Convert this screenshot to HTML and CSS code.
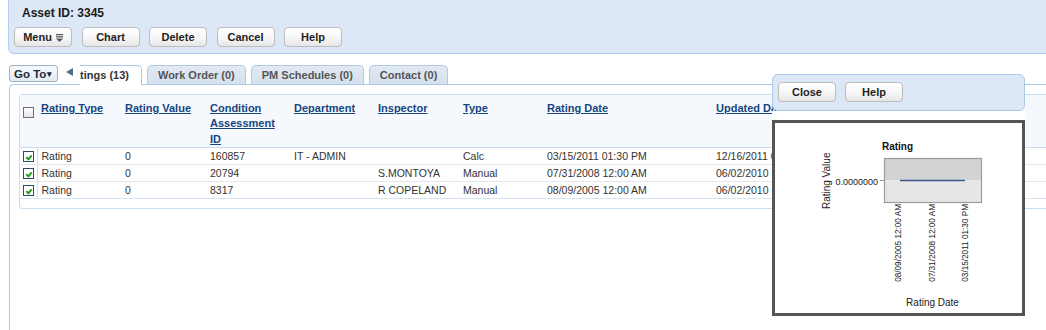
FILE: index.html
```html
<!DOCTYPE html>
<html>
<head>
<meta charset="utf-8">
<link rel="stylesheet" href="styles.css">
</head>
<body>
<div class="toolbar">
  <div class="title">Asset ID: 3345</div>
  <div class="btns">
    <button class="btn">Menu <svg class="menu-ico" width="7" height="8" viewBox="0 0 7 8"><rect x="0" y="0" width="7" height="1.2" fill="#555"/><rect x="0" y="2.2" width="7" height="1.2" fill="#555"/><path d="M0 4.6 L7 4.6 L3.5 8 Z" fill="#555"/></svg></button>
    <button class="btn">Chart</button>
    <button class="btn">Delete</button>
    <button class="btn">Cancel</button>
    <button class="btn">Help</button>
  </div>
</div>

<div class="tabbar">
  <button class="goto">Go To<span class="caret">&#9662;</span></button>
  <span class="tab-arrow"></span>
  <div class="tab-viewport">
    <div class="tabs">
      <div class="tab active">Ratings (13)</div>
      <div class="tab">Work Order (0)</div>
      <div class="tab">PM Schedules (0)</div>
      <div class="tab">Contact (0)</div>
    </div>
  </div>
</div>

<div class="content">
  <div class="grid-panel">
    <table class="grid">
      <colgroup>
        <col class="c-cb"><col class="c84"><col class="c85"><col class="c84"><col class="c84"><col class="c85"><col class="c84"><col class="c169"><col class="c169"><col class="c169">
      </colgroup>
      <thead>
        <tr>
          <th class="cb"><span class="chk"></span></th>
          <th><a>Rating Type</a></th>
          <th><a>Rating Value</a></th>
          <th><a>Condition Assessment ID</a></th>
          <th><a>Department</a></th>
          <th><a>Inspector</a></th>
          <th><a>Type</a></th>
          <th><a>Rating Date</a></th>
          <th><a>Updated Date</a></th>
          <th><a>Updated By</a></th>
        </tr>
      </thead>
      <tbody>
        <tr>
          <td class="cb"><span class="chk on"></span></td>
          <td>Rating</td><td>0</td><td>160857</td><td>IT - ADMIN</td><td></td><td>Calc</td><td>03/15/2011 01:30 PM</td><td>12/16/2011 09:25 AM</td><td></td>
        </tr>
        <tr>
          <td class="cb"><span class="chk on"></span></td>
          <td>Rating</td><td>0</td><td>20794</td><td></td><td>S.MONTOYA</td><td>Manual</td><td>07/31/2008 12:00 AM</td><td>06/02/2010 11:12 AM</td><td></td>
        </tr>
        <tr>
          <td class="cb"><span class="chk on"></span></td>
          <td>Rating</td><td>0</td><td>8317</td><td></td><td>R COPELAND</td><td>Manual</td><td>08/09/2005 12:00 AM</td><td>06/02/2010 11:12 AM</td><td></td>
        </tr>
      </tbody>
    </table>
  </div>
</div>

<div class="chart-popup">
  <div class="popbar">
    <button class="btn">Close</button>
    <button class="btn">Help</button>
  </div>
  <div class="chart-area">
    <div class="chart-box">
      <svg width="247" height="190" viewBox="0 0 247 190">
        <text x="122.5" y="27" class="ch-title" text-anchor="middle">Rating</text>
        <rect x="109.5" y="35.5" width="97" height="22" fill="#d3d3d3"/>
        <rect x="109.5" y="57.5" width="97" height="22" fill="#e6e6e6"/>
        <rect x="109.5" y="35.5" width="97" height="44" fill="none" stroke="#9c9c9c" stroke-width="1.2"/>
        <line x1="125" y1="57.5" x2="190" y2="57.5" stroke="#3c5a8c" stroke-width="1.4"/>
        <line x1="105" y1="57.5" x2="109" y2="57.5" stroke="#9c9c9c" stroke-width="1"/>
        <text x="103" y="62" class="ch-tick" text-anchor="end">0.0000000</text>
        <text transform="translate(54.5,57.8) rotate(-90)" class="ch-axis" text-anchor="middle">Rating Value</text>
        <text transform="translate(126.2,81) rotate(-90)" class="ch-date" text-anchor="end">08/09/2005 12:00 AM</text>
        <text transform="translate(159.6,81) rotate(-90)" class="ch-date" text-anchor="end">07/31/2008 12:00 AM</text>
        <text transform="translate(193,81) rotate(-90)" class="ch-date" text-anchor="end">03/15/2011 01:30 PM</text>
        <text x="157.5" y="182.5" class="ch-axis" text-anchor="middle">Rating Date</text>
      </svg>
    </div>
  </div>
</div>
</body>
</html>
```
FILE: styles.css
```css
* { box-sizing: border-box; }
html, body { margin: 0; padding: 0; }
body {
  width: 1046px;
  height: 330px;
  overflow: hidden;
  position: relative;
  background: #fff;
  font-family: "Liberation Sans", Arial, sans-serif;
  color: #333;
}

/* top toolbar */
.toolbar {
  margin-left: 8px;
  height: 54px;
  background: #dce8f5;
  border-left: 1px solid #b3cfec;
  border-bottom: 1px solid #a9c8ea;
  border-bottom-left-radius: 6px;
  padding: 6px 0 0 5px;
}
.title {
  margin-left: 8px;
  font-size: 12px;
  font-weight: bold;
  line-height: 14px;
  color: #1b1b1b;
}
.btns {
  display: flex;
  gap: 9.5px;
  margin-top: 7px;
}
.btn {
  width: 58px;
  height: 20px;
  padding: 0;
  border: 1px solid #bcbcbc;
  border-radius: 4px;
  background: linear-gradient(#ffffff, #f6f6f6 55%, #e6e6e6);
  font-family: "Liberation Sans", Arial, sans-serif;
  font-size: 11px;
  font-weight: bold;
  color: #222;
  display: flex;
  align-items: center;
  justify-content: center;
  gap: 4px;
}
.menu-ico { display: block; margin-top: 1px; }

/* tabs */
.tabbar {
  display: flex;
  align-items: flex-start;
  margin-top: 11px;
  height: 19px;
  padding-left: 9px;
  position: relative;
  z-index: 2;
}
.goto {
  width: 49px;
  height: 17px;
  padding: 0 0 0 4px;
  border: 1px solid #9fb1c5;
  border-radius: 3px;
  background: linear-gradient(#f7fafd, #e2eaf4);
  font-family: "Liberation Sans", Arial, sans-serif;
  font-size: 11.5px;
  font-weight: bold;
  color: #1c2a3c;
  display: flex;
  align-items: center;
}
.caret { font-size: 9px; margin-left: 1px; }
.tab-arrow {
  width: 0;
  height: 0;
  margin: 3px 0 0 8px;
  border-top: 4.5px solid transparent;
  border-bottom: 4.5px solid transparent;
  border-right: 7px solid #4f6c8b;
}
.tab-viewport {
  margin-left: 7px;
  flex: 1;
  overflow: hidden;
  height: 20px;
}
.tabs {
  display: flex;
  gap: 5px;
  margin-left: -25px;
  height: 20px;
}
.tab {
  height: 19px;
  padding: 0 10px;
  border: 1px solid #b1c9e3;
  border-bottom: none;
  border-radius: 5px 5px 0 0;
  background: linear-gradient(#e2eaf4, #d4e0ed);
  font-size: 11px;
  font-weight: bold;
  line-height: 18px;
  color: #555;
  white-space: nowrap;
  flex: none;
}
.tab.active {
  height: 20px;
  padding: 0 12px 0 10px;
  background: #fff;
  border-color: #a9c8ea;
  color: #333;
}

/* content */
.content {
  margin-left: 9px;
  height: 260px;
  border-top: 1px solid #a9c8ea;
  border-left: 1px solid #a9c8ea;
  border-top-left-radius: 5px;
  padding: 9px 0 0 9px;
}
.grid-panel {
  width: 1200px;
  border: 1px solid #c9dcf0;
  border-right: none;
  border-radius: 4px 0 0 4px;
  padding-bottom: 9px;
}
.grid {
  border-collapse: collapse;
  table-layout: fixed;
  width: 1030px;
}
.c-cb { width: 17px; }
.c84 { width: 84px; }
.c85 { width: 85px; }
.c169 { width: 169px; }

.grid thead tr { background: #f5f8fc; }
.grid th {
  text-align: left;
  vertical-align: top;
  padding: 6px 8px 0 4px;
  font-size: 11px;
  font-weight: bold;
  line-height: 15.4px;
  color: #17467f;
  border-bottom: 1px solid #c9dcf0;
}
.grid th a { text-decoration: underline; }
.grid th.cb { padding: 12px 0 0 3px; }

.grid td {
  height: 17px;
  padding: 0 8px 0 4px;
  font-size: 10.5px;
  line-height: 16px;
  color: #333;
  white-space: nowrap;
  overflow: hidden;
  border-bottom: 1px solid #e3e6ea;
}
.grid tbody tr:last-child td { border-bottom-color: #d7e4f2; }
.grid td.cb {
  padding: 0 0 0 3px;
  border-right: 1px solid #dcdcdc;
}

.chk {
  display: block;
  width: 11px;
  height: 11px;
  border: 1px solid #6f6f6f;
  background: linear-gradient(#ffffff, #e6e6e6);
}
.chk.on {
  margin-top: 1px;
  border-color: #2d4c6c;
  background: #fff;
  position: relative;
}
.chk.on::after {
  content: "";
  position: absolute;
  left: 3px;
  top: 2px;
  width: 2px;
  height: 4px;
  border-right: 2px solid #22a022;
  border-bottom: 2px solid #22a022;
  transform: rotate(40deg);
}

/* chart popup */
.chart-popup {
  position: absolute;
  left: 772px;
  top: 74px;
  width: 253px;
  z-index: 5;
}
.popbar {
  height: 37px;
  background: #dce8f5;
  border: 1px solid #a9c8ea;
  border-radius: 6px;
  padding: 7px 0 0 5px;
  display: flex;
  gap: 9px;
  align-items: flex-start;
}
.chart-area {
  background: #fff;
  padding-top: 9px;
}
.chart-box {
  width: 253px;
  height: 196px;
  border: 3px solid #555;
  background: #fff;
}
.chart-box svg { display: block; }
.ch-title { font-family: "Liberation Sans", Arial, sans-serif; font-size: 10px; font-weight: bold; fill: #111; }
.ch-tick { font-family: "Liberation Sans", Arial, sans-serif; font-size: 9px; fill: #222; }
.ch-axis { font-family: "Liberation Sans", Arial, sans-serif; font-size: 10px; fill: #222; }
.ch-date { font-family: "Liberation Sans", Arial, sans-serif; font-size: 8.2px; fill: #222; }
```
